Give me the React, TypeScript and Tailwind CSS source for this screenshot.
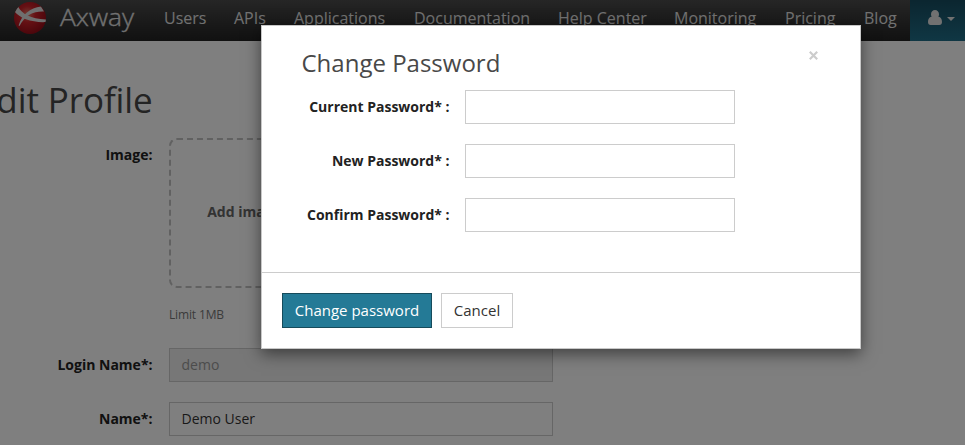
import React from 'react';

const links = [
  { label: 'Users', width: 'w-[42px]' },
  { label: 'APIs', width: 'w-[32px]' },
  { label: 'Applications', width: 'w-[92px]' },
  { label: 'Documentation', width: 'w-[116px]' },
  { label: 'Help Center', width: 'w-[88px]' },
  { label: 'Monitoring', width: 'w-[83px]' },
  { label: 'Pricing', width: 'w-[51px]' },
  { label: 'Blog', width: 'w-[33px]' },
];

function Logo() {
  return (
    <svg className="h-[34px] w-[34px] shrink-0" viewBox="0 0 34 34">
      <defs>
        <radialGradient id="ball" cx="42%" cy="38%" r="62%">
          <stop offset="0" stopColor="#e87a68" />
          <stop offset="0.4" stopColor="#cc2229" />
          <stop offset="1" stopColor="#980d18" />
        </radialGradient>
        <clipPath id="ballClip">
          <circle cx="17" cy="17" r="16" />
        </clipPath>
      </defs>
      <circle cx="17" cy="17" r="16" fill="url(#ball)" />
      <g clipPath="url(#ballClip)" fill="#dedede">
        <path d="M5 5.500C9 13 18 18 34 18.500V21C20 22 7 17.500 1.500 10.500Z" />
        <path d="M31 10.500C21 10 12 14 6.500 25L5.600 24.500C9 13.500 17 7 28 5.500Z" />
      </g>
    </svg>
  );
}

function Navbar() {
  return (
    <header className="flex h-[41px] items-start bg-gradient-to-b from-[#4c4c4c] to-[#222222] text-[#e2e2e2]">
      <div className="ml-[13px] flex h-[36px] w-[137px] shrink-0 items-center">
        <Logo />
        <svg className="ml-[12px] h-[36px] w-[80px] shrink-0" viewBox="0 0 80 36">
          <text x="1" y="26" textLength="74" lengthAdjust="spacingAndGlyphs" fill="#e2e2e2" stroke="#e2e2e2" strokeWidth="0.300" className="text-[23px] font-light">
            Axway
          </text>
        </svg>
      </div>
      <nav className="-mr-[1px] flex h-[36px] shrink-0 items-center">
        {links.map((l) => (
          <a key={l.label} className={`mx-[14px] ${l.width} shrink-0 whitespace-nowrap text-[16px] leading-[20px]`}>
            {l.label}
          </a>
        ))}
      </nav>
      <div className="flex h-[41px] w-[55px] shrink-0 items-start bg-gradient-to-b from-[#164c60] to-[#206e88] pl-[18px] pt-[10px]">
        <svg className="h-[15px] w-[14px]" viewBox="0 0 14 15" fill="#e2e2e2">
          <path d="M7 0C9.2 0 11 1.8 11 4.2c0 .9-.2 1.8-.6 2.500C12.900 7 14 9 14 12c0 1.700-1 3-2.700 3H2.700C1 15 0 13.700 0 12c0-3 1.100-5 3.600-5.300C3.200 6 3 5.100 3 4.200 3 1.800 4.800 0 7 0Z" />
        </svg>
        <svg className="ml-[5px] mt-[7px] h-[4px] w-[8px]" viewBox="0 0 8 4" fill="#e2e2e2">
          <path d="M0 0H8L4 4Z" />
        </svg>
      </div>
    </header>
  );
}

function ProfilePage() {
  return (
    <main>
      <h1 className="-ml-[23px] pt-[39px] text-[35px] leading-[40px] tracking-[-0.1px] text-[#484848]">Edit Profile</h1>
      <div className="mt-[18px] flex">
        <label className="w-[152.500px] pt-[7px] text-right text-[14px] font-bold leading-[20px] text-[#222]">Image:</label>
        <div className="ml-[16.500px]">
          <div className="flex h-[150px] w-[150px] items-center justify-center rounded-[8px] border-2 border-dashed border-[#c2c2c2] pb-[2px] text-[14px] font-bold leading-[20px] text-[#666]">
            Add image
          </div>
          <p className="mt-[18px] text-[12px] leading-[17px] tracking-[-0.15px] text-[#777]">Limit 1MB</p>
        </div>
      </div>
      <div className="mt-[25px] flex">
        <label className="w-[152.500px] pt-[7px] text-right text-[14px] font-bold leading-[20px] text-[#222]">Login Name*:</label>
        <div className="ml-[16.500px] h-[34px] w-[384px] border border-[#ccc] bg-[#eee] px-[11.500px] pt-[6px] text-[14px] leading-[20px] text-[#999]">
          demo
        </div>
      </div>
      <div className="mt-[20px] flex">
        <label className="w-[152.500px] pt-[7px] text-right text-[14px] font-bold leading-[20px] text-[#222]">Name*:</label>
        <div className="ml-[16.500px] h-[34px] w-[384px] border border-[#ccc] bg-white px-[11.500px] pt-[6px] text-[14px] leading-[20px] text-[#333]">
          Demo User
        </div>
      </div>
    </main>
  );
}

function ChangePasswordDialog() {
  return (
    <div className="absolute left-[261px] top-[25px] flex h-[324px] w-[600px] flex-col border border-[#c8c8c8] bg-white shadow-[0_5px_15px_rgba(0,0,0,0.5)]">
      <div className="flex h-[64px] items-start justify-between pl-[39.500px] pr-[42px] pt-[23px]">
        <h4 className="text-[24px] leading-[28px] text-[#484848]">Change Password</h4>
        <svg className="mt-[2px] h-[9px] w-[9px]" viewBox="0 0 9 9" stroke="#ccc" strokeWidth="2.200">
          <path d="M.8.8 8.200 8.200M8.200.8.8 8.200" />
        </svg>
      </div>
      <div className="flex h-[183px] flex-col gap-[20px] border-b border-[#ccc]">
        {['Current Password* :', 'New Password* :', 'Confirm Password* :'].map((label) => (
          <div key={label} className="flex">
            <label className="w-[187.500px] pt-[7px] text-right text-[14px] font-bold leading-[20px] text-[#222]">{label}</label>
            <input type="password" className="ml-[15.500px] h-[34px] w-[270px] border border-[#ccc] bg-white px-3" />
          </div>
        ))}
      </div>
      <div className="flex gap-[9px] pl-[20px] pt-[20px]">
        <button className="h-[35px] w-[150px] whitespace-nowrap border border-[#164b5b] bg-[#247a96] pb-[2px] text-[15px] leading-[20px] text-white">
          Change password
        </button>
        <button className="h-[35px] w-[72px] border border-[#ccc] bg-white pb-[2px] text-[15px] leading-[20px] text-[#333]">Cancel</button>
      </div>
    </div>
  );
}

export default function App() {
  return (
    <div className="relative h-[445px] w-[965px] overflow-hidden bg-white font-['Open_Sans',sans-serif]">
      <Navbar />
      <ProfilePage />
      <div className="absolute inset-0 bg-black/50" />
      <ChangePasswordDialog />
    </div>
  );
}
